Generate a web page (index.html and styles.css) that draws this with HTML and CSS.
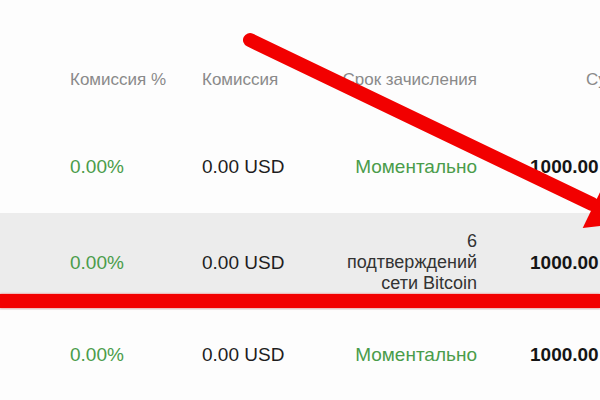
FILE: index.html
```html
<!DOCTYPE html>
<html lang="ru">
<head>
<meta charset="utf-8">
<title>Комиссии</title>
<link rel="stylesheet" href="styles.css">
</head>
<body>
<div class="page">
  <div class="table">
    <div class="row head">
      <div class="cell">Комиссия %</div>
      <div class="cell">Комиссия</div>
      <div class="cell right">Срок зачисления</div>
      <div class="cell sum-head">Сумма</div>
    </div>
    <div class="row r1">
      <div class="cell green">0.00%</div>
      <div class="cell">0.00 USD</div>
      <div class="cell right green">Моментально</div>
      <div class="cell bold">1000.00</div>
    </div>
    <div class="row r2 shaded">
      <div class="cell green">0.00%</div>
      <div class="cell">0.00 USD</div>
      <div class="cell right multi">6<br>подтверждений<br>сети Bitcoin</div>
      <div class="cell bold">1000.00</div>
    </div>
    <div class="row r3">
      <div class="cell green">0.00%</div>
      <div class="cell">0.00 USD</div>
      <div class="cell right green">Моментально</div>
      <div class="cell bold">1000.00</div>
    </div>
  </div>
  <div class="underline"></div>
  <svg class="arrow" width="600" height="400" viewBox="0 0 600 400">
    <line x1="250" y1="40" x2="592" y2="204" stroke="#f20000" stroke-width="14" stroke-linecap="round"/>
    <polygon points="582.7,227.9 604.5,182.9 629.6,222.8" fill="#f20000"/>
  </svg>
</div>
</body>
</html>
```
FILE: styles.css
```css
html, body {
  margin: 0;
  padding: 0;
  background: #fdfdfd;
}
.page {
  position: relative;
  width: 600px;
  height: 400px;
  overflow: hidden;
  font-family: "Liberation Sans", Arial, sans-serif;
  color: #1e1e1e;
}
.table {
  display: flex;
  flex-direction: column;
}
.row {
  display: grid;
  grid-template-columns: 132px 138px 137px auto;
  align-items: center;
  padding-left: 70px;
  font-size: 19px;
  white-space: nowrap;
}
.head {
  height: 120px;
  padding-top: 40px;
  box-sizing: border-box;
  font-size: 17px;
  color: #8a8a8a;
}
.r1 {
  height: 93px;
}
.r2 {
  height: 97px;
  align-items: start;
  padding-top: 18px;
  box-sizing: border-box;
}
.r2 .cell:not(.multi) {
  padding-top: 21px;
}
.r3 {
  height: 90px;
}
.shaded {
  background: #ececec;
}
.right {
  text-align: right;
}
.multi {
  font-size: 18px;
  line-height: 21px;
  color: #333;
}
.green {
  color: #4a9c4a;
}
.bold {
  font-weight: bold;
  padding-left: 53px;
  color: #151515;
}
.sum-head {
  padding-left: 109px;
}
.underline {
  position: absolute;
  left: 0;
  top: 294px;
  width: 600px;
  height: 14px;
  background: #f20000;
  box-shadow: 0 0 2px rgba(242, 0, 0, 0.6);
}
.arrow {
  position: absolute;
  left: 0;
  top: 0;
  overflow: visible;
}
```
